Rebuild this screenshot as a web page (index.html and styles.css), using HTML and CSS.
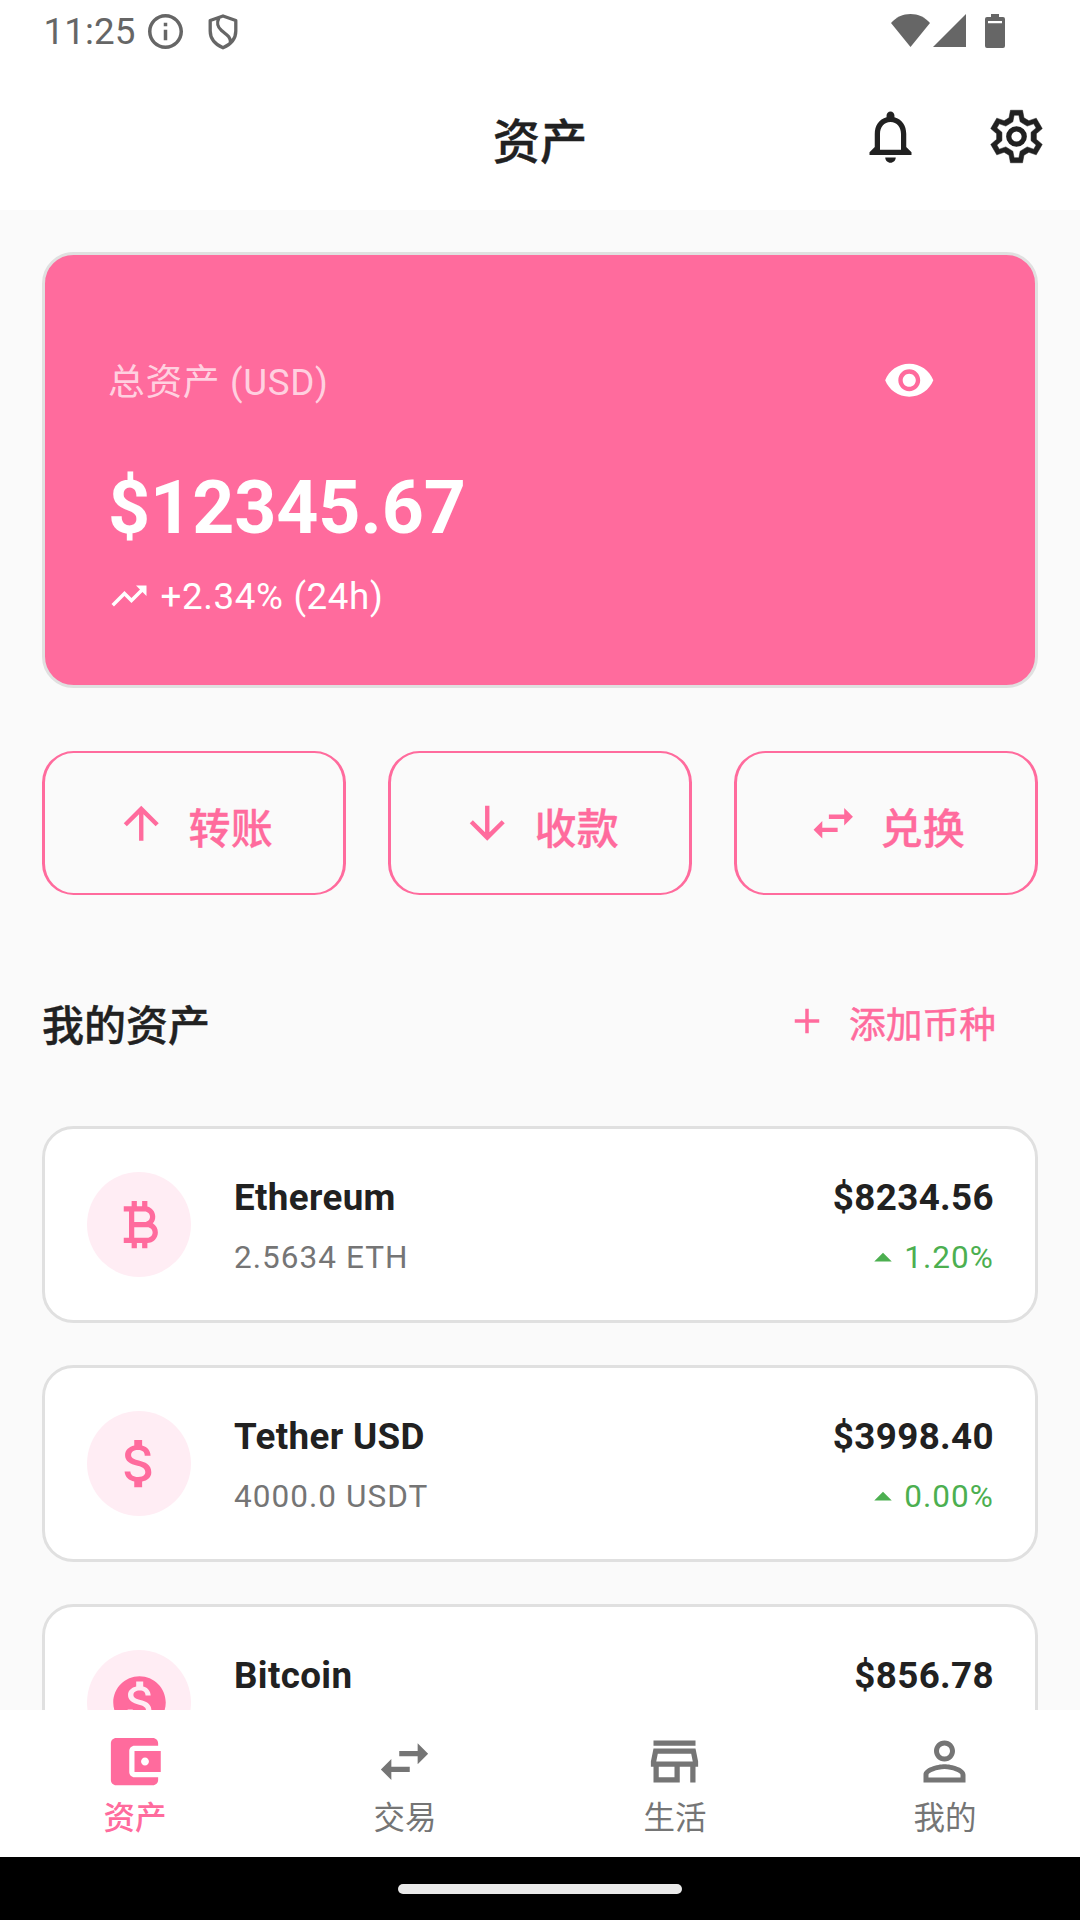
FILE: index.html
```html
<!DOCTYPE html>
<html lang="zh-CN">
<head>
<meta charset="utf-8">
<title>资产</title>
<link rel="stylesheet" href="styles.css">
</head>
<body>
<div class="screen">
  <div class="status">
    <span class="clock">11:25</span>
    <svg class="info" viewBox="2 2 20 20"><path d="M11 7h2v2h-2zm0 4h2v6h-2zm1-9C6.480 2 2 6.480 2 12s4.480 10 10 10 10-4.480 10-10S17.520 2 12 2zm0 18c-4.410 0-8-3.590-8-8s3.590-8 8-8 8 3.590 8 8-3.590 8-8 8z"/></svg>
    <svg class="shield" viewBox="0 0 30 36"><path d="M15 2 27.800 6.500V17C27.800 25 22.500 30.500 15 33.800 7.500 30.500 2.200 25 2.200 17V6.500Z M11 3.500C8.500 9 9 12.500 13.500 16.500S22.500 22 22.500 28.500"/></svg>
    <span class="grow"></span>
    <svg class="wifi" viewBox="0 0 39 33"><path d="M19.500 33 0 9C5 3.200 12 0 19.500 0S34 3.200 39 9Z"/></svg>
    <svg class="signal" viewBox="0 0 33 33"><path d="M33 0V33H0Z"/></svg>
    <svg class="battery" viewBox="0 0 20 34"><path fill-rule="evenodd" d="M6 0h8v3h4a2 2 0 0 1 2 2v27a2 2 0 0 1-2 2H2a2 2 0 0 1-2-2V5a2 2 0 0 1 2-2h4ZM3 7v2.300h14V7Z"/></svg>
  </div>
  <header class="appbar">
    <h1>资产</h1>
    <div class="actions">
      <button class="icon-button"><svg class="i24" viewBox="0 0 24 24"><path d="M12 22c1.100 0 2-.9 2-2h-4c0 1.100.9 2 2 2zm6-6v-5c0-3.070-1.630-5.640-4.500-6.320V4c0-.83-.67-1.500-1.500-1.500s-1.500.67-1.500 1.500v.68C7.640 5.360 6 7.920 6 11v5l-2 2v1h16v-1l-2-2zm-2 1H8v-6c0-2.480 1.510-4.500 4-4.500s4 2.020 4 4.500v6z"/></svg></button>
      <button class="icon-button"><svg class="i24 gear" viewBox="0 0 24 24"><path fill-rule="evenodd" d="M9.150 4.900 9.700 2h4.600l.55 2.900 1.870 1.080 2.790-.97 2.300 3.980-2.240 1.930v2.160l2.240 1.930-2.300 3.980-2.790-.97-1.870 1.080-.55 2.900H9.700l-.55-2.900-1.870-1.080-2.790.97-2.300-3.980 2.240-1.930v-2.160L2.190 8.990l2.300-3.980 2.790.97ZM10.600 6.400 7.940 8.040 5.440 7.170 4.540 8.730 6.450 10.410V13.590L4.540 15.270 5.440 16.830 7.940 15.960 10.600 17.600 11.100 20.100H12.900L13.400 17.600 16.060 15.960 18.560 16.830 19.460 15.270 17.550 13.590V10.410L19.460 8.730 18.560 7.170 16.060 8.040 13.400 6.400 12.900 3.900H11.100Z"/><circle cx="12" cy="12" r="2.950" fill="none" stroke="currentColor" stroke-width="2"/></svg></button>
    </div>
  </header>

  <main class="content">
    <section class="balance">
      <div class="balance-top">
        <span class="balance-label">总资产 (USD)</span>
        <button class="icon-button"><svg class="i20" viewBox="0 0 24 24"><path d="M12 4.500C7 4.500 2.730 7.610 1 12c1.730 4.390 6 7.500 11 7.500s9.270-3.110 11-7.500c-1.730-4.390-6-7.500-11-7.500zM12 17c-2.760 0-5-2.240-5-5s2.240-5 5-5 5 2.240 5 5-2.240 5-5 5zm0-8c-1.660 0-3 1.340-3 3s1.340 3 3 3 3-1.340 3-3-1.340-3-3-3z"/></svg></button>
      </div>
      <div class="amount">$12345.67</div>
      <div class="trend">
        <svg class="i16" viewBox="0 0 24 24"><path d="M16 6l2.290 2.290-4.880 4.880-4-4L2 16.590 3.410 18l6-6 4 4 6.300-6.290L22 12V6z"/></svg>
        <span>+2.34% (24h)</span>
      </div>
    </section>

    <div class="quick">
      <button class="outlined"><svg class="i20" viewBox="0 0 24 24"><path d="M4 12l1.410 1.410L11 7.830V20h2V7.830l5.580 5.590L20 12l-8-8-8 8z"/></svg><span>转账</span></button>
      <button class="outlined"><svg class="i20" viewBox="0 0 24 24"><path d="M20 12l-1.410-1.410L13 16.170V4h-2v12.170l-5.580-5.590L4 12l8 8 8-8z"/></svg><span>收款</span></button>
      <button class="outlined"><svg class="i20" viewBox="0 0 24 24"><path d="M6.990 11L3 15l3.990 4v-3H14v-2H6.990v-3zM21 9l-3.990-4v3H10v2h7.010v3L21 9z"/></svg><span>兑换</span></button>
    </div>

    <div class="section-head">
      <h2>我的资产</h2>
      <button class="add"><svg class="i16" viewBox="0 0 24 24"><path d="M19 13h-6v6h-2v-6H5v-2h6V5h2v6h6v2z"/></svg><span>添加币种</span></button>
    </div>

    <div class="assets">
      <article class="asset">
        <div class="coin"><svg class="i24" viewBox="0 0 24 24"><path d="M17.060 11.570C17.650 10.880 18 9.980 18 9c0-1.860-1.270-3.430-3-3.870V3h-2v2h-2V3H9v2H6v2h2v10H6v2h3v2h2v-2h2v2h2v-2c2.210 0 4-1.790 4-4 0-1.450-.78-2.730-1.940-3.430zM10 7h4c1.100 0 2 .9 2 2s-.9 2-2 2h-4V7zm5 10h-5v-4h5c1.100 0 2 .9 2 2s-.9 2-2 2z"/></svg></div>
        <div class="asset-name"><strong>Ethereum</strong><small>2.5634 ETH</small></div>
        <div class="asset-value"><strong>$8234.56</strong><small class="up"><svg class="i16" viewBox="0 0 24 24"><path d="M7 14l5-5 5 5z"/></svg>1.20%</small></div>
      </article>
      <article class="asset">
        <div class="coin"><svg class="i24" viewBox="0 0 24 24"><path d="M11.800 10.900c-2.270-.59-3-1.200-3-2.150 0-1.090 1.010-1.850 2.700-1.850 1.780 0 2.440.85 2.500 2.100h2.210c-.07-1.720-1.120-3.300-3.210-3.810V3h-3v2.160c-1.940.42-3.500 1.680-3.500 3.610 0 2.310 1.910 3.460 4.700 4.130 2.500.6 3 1.480 3 2.410 0 .69-.49 1.790-2.700 1.790-2.060 0-2.870-.92-2.980-2.100h-2.200c.12 2.190 1.760 3.420 3.680 3.830V21h3v-2.150c1.950-.37 3.500-1.500 3.500-3.550 0-2.840-2.430-3.810-4.700-4.400z"/></svg></div>
        <div class="asset-name"><strong>Tether USD</strong><small>4000.0 USDT</small></div>
        <div class="asset-value"><strong>$3998.40</strong><small class="up"><svg class="i16" viewBox="0 0 24 24"><path d="M7 14l5-5 5 5z"/></svg>0.00%</small></div>
      </article>
      <article class="asset">
        <div class="coin"><svg class="i24" viewBox="0 0 24 24"><path d="M12 2C6.480 2 2 6.480 2 12s4.480 10 10 10 10-4.480 10-10S17.520 2 12 2zm1.410 16.090V20h-2.670v-1.930c-1.710-.36-3.160-1.460-3.270-3.400h1.960c.1 1.050.82 1.870 2.650 1.870 1.960 0 2.400-.98 2.400-1.590 0-.83-.44-1.610-2.670-2.140-2.480-.6-4.180-1.620-4.180-3.670 0-1.720 1.390-2.840 3.110-3.210V4h2.670v1.950c1.860.45 2.790 1.860 2.850 3.390H14.300c-.05-1.110-.64-1.870-2.220-1.870-1.500 0-2.400.68-2.400 1.640 0 .84.65 1.390 2.670 1.910s4.180 1.390 4.180 3.910c-.01 1.830-1.380 2.830-3.120 3.160z"/></svg></div>
        <div class="asset-name"><strong>Bitcoin</strong></div>
        <div class="asset-value"><strong>$856.78</strong></div>
      </article>
    </div>
  </main>

  <nav class="tabs">
    <a class="tab active"><svg class="i24" viewBox="0 0 24 24"><path d="M21 18v1c0 1.100-.9 2-2 2H5c-1.110 0-2-.9-2-2V5c0-1.100.89-2 2-2h14c1.100 0 2 .9 2 2v1h-9c-1.110 0-2 .9-2 2v8c0 1.100.89 2 2 2h9zm-9-2h10V8H12v8zm4-2.500c-.83 0-1.500-.67-1.500-1.500s.67-1.500 1.500-1.500 1.500.67 1.500 1.500-.67 1.500-1.500 1.500z"/></svg><span>资产</span></a>
    <a class="tab"><svg class="i24" viewBox="0 0 24 24"><path d="M6.990 11L3 15l3.990 4v-3H14v-2H6.990v-3zM21 9l-3.990-4v3H10v2h7.010v3L21 9z"/></svg><span>交易</span></a>
    <a class="tab"><svg class="i24" viewBox="0 0 24 24"><path d="M18.360 9l.6 3H5.040l.6-3h12.720M20 4H4v2h16V4zm0 3H4l-1 5v2h1v6h10v-6h4v6h2v-6h1v-2l-1-5zM6 18v-4h6v4H6z"/></svg><span>生活</span></a>
    <a class="tab"><svg class="i24" viewBox="0 0 24 24"><path d="M12 5.900a2.100 2.100 0 1 1 0 4.200 2.100 2.100 0 0 1 0-4.200m0 9c2.970 0 6.100 1.460 6.100 2.100v1.100H5.900V17c0-.64 3.130-2.100 6.100-2.100M12 4C9.790 4 8 5.790 8 8s1.790 4 4 4 4-1.790 4-4-1.790-4-4-4zm0 9c-2.670 0-8 1.340-8 4v3h16v-3c0-2.660-5.330-4-8-4z"/></svg><span>我的</span></a>
  </nav>
  <div class="gesture"><div class="pill"></div></div>
</div>
</body>
</html>
```
FILE: styles.css
```css
* { box-sizing: border-box; }
body {
  margin: 0;
  background: #fafafa;
  color: #212121;
  font-family: Roboto, "Noto Sans CJK SC", sans-serif;
}
h1, h2 { margin: 0; }
button {
  margin: 0;
  padding: 0;
  border: 0;
  background: none;
  color: inherit;
  font: inherit;
}
svg { display: block; flex: none; fill: currentColor; }
.i24 { width: 63px; height: 63px; }
.i20 { width: 52.5px; height: 52.5px; }
.i16 { width: 42px; height: 42px; }
.grow { flex: 1; }

.screen {
  display: flex;
  flex-direction: column;
  width: 1080px;
  height: 1920px;
  overflow: hidden;
}

.status {
  display: flex;
  align-items: flex-start;
  height: 63px;
  padding: 14px 75px 0 43.5px;
  background: #fff;
  color: #666;
  font-size: 36.75px;
}
.clock { width: 104.5px; line-height: 36px; letter-spacing: 0.1px; }
.info { width: 35px; height: 35px; }
.shield {
  width: 30px;
  height: 36px;
  margin-left: 25px;
  fill: none;
  stroke: currentColor;
  stroke-width: 3.3;
  stroke-linejoin: round;
}
.wifi { width: 39px; height: 33px; }
.signal { width: 33px; height: 33px; margin-left: 3px; }
.battery { width: 20px; height: 34px; margin-left: 19px; }

.appbar {
  display: grid;
  grid-template-columns: 1fr auto 1fr;
  align-items: center;
  height: 147px;
  background: #fff;
}
.appbar h1 {
  grid-column: 2;
  padding-top: 13px;
  font-size: 47.25px;
  font-weight: 500;
  line-height: 60px;
  -webkit-text-stroke: 0.4px currentColor;
}
.actions { display: flex; justify-content: flex-end; }
.icon-button {
  display: grid;
  place-items: center;
  width: 126px;
  height: 126px;
}
.actions .i24 { margin-right: 1px; }
.gear path { stroke: currentColor; stroke-width: 0.2; }

.content {
  flex: 1;
  min-height: 0;
  overflow: hidden;
  padding: 42px 42px 0;
}

.balance {
  height: 436px;
  padding: 62.5px 63px;
  border: 3px solid #e0e0e0;
  border-radius: 31.5px;
  background: #ff6b9d;
  color: #fff;
  font-size: 36.75px;
}
.balance-top {
  display: flex;
  align-items: center;
  justify-content: space-between;
  height: 126px;
}
.balance-label {
  padding-bottom: 4px;
  color: rgba(255, 255, 255, 0.7);
  letter-spacing: 0.66px;
}
.amount {
  padding-top: 17px;
  font-size: 73.5px;
  font-weight: 700;
  line-height: 94px;
  letter-spacing: -0.1px;
}
.trend {
  display: flex;
  align-items: center;
  gap: 10.5px;
  height: 52px;
  margin-top: 15px;
  letter-spacing: 0.62px;
}
.trend span { padding-top: 2px; }

.quick { display: flex; gap: 42px; margin-top: 63px; }
.outlined {
  display: flex;
  flex: 1;
  align-items: center;
  justify-content: center;
  gap: 21px;
  height: 144px;
  border: solid #ff6b9d;
  border-width: 2px 3px;
  border-radius: 31.5px;
  color: #ff6b9d;
  font-size: 42px;
  font-weight: 500;
}
.outlined span {
  padding-top: 5px;
  letter-spacing: 0.26px;
  -webkit-text-stroke: 0.3px currentColor;
}

.section-head {
  display: flex;
  align-items: center;
  justify-content: space-between;
  height: 126px;
  margin-top: 63px;
}
.section-head h2 {
  padding-top: 3px;
  font-size: 42px;
  font-weight: 500;
  -webkit-text-stroke: 0.4px currentColor;
}
.add {
  display: flex;
  align-items: center;
  gap: 21px;
  padding-right: 42px;
  color: #ff6b9d;
  font-size: 36.75px;
  font-weight: 400;
}
.add span { padding-top: 1px; -webkit-text-stroke: 0.5px currentColor; }

.assets { display: flex; flex-direction: column; gap: 42px; margin-top: 42px; }
.asset {
  display: flex;
  gap: 43px;
  height: 197px;
  padding: 43px 41px 43px 42px;
  border: 3px solid #e0e0e0;
  border-radius: 31.5px;
  background: #fff;
}
.coin {
  display: grid;
  place-items: center;
  width: 104px;
  height: 105px;
  border-radius: 50%;
  background: #ffedf4;
  color: #ff6b9d;
}
.asset-name, .asset-value { display: flex; flex-direction: column; gap: 13px; }
.asset-name { flex: 1; }
.asset-value { align-items: flex-end; }
.asset strong {
  font-size: 36.75px;
  font-weight: 700;
  line-height: 51px;
  letter-spacing: 0.36px;
}
.asset small {
  color: #757575;
  font-size: 31.5px;
  line-height: 44px;
  letter-spacing: 1.05px;
}
.asset .up { display: flex; align-items: center; color: #4caf50; }

.tabs { display: flex; height: 147px; background: #fff; color: #757575; }
.tab {
  display: flex;
  flex: 1;
  flex-direction: column;
  align-items: center;
  padding-top: 20px;
  font-size: 31.5px;
  line-height: 42px;
}
.tab .i24 { margin-right: 1px; }
.tab span { padding-top: 5px; }
.tab.active { color: #ff6b9d; font-weight: 500; }

.gesture {
  display: flex;
  justify-content: center;
  height: 63px;
  padding-top: 27px;
  background: #000;
}
.pill { width: 284px; height: 10px; border-radius: 5px; background: #eaeaea; }
```
